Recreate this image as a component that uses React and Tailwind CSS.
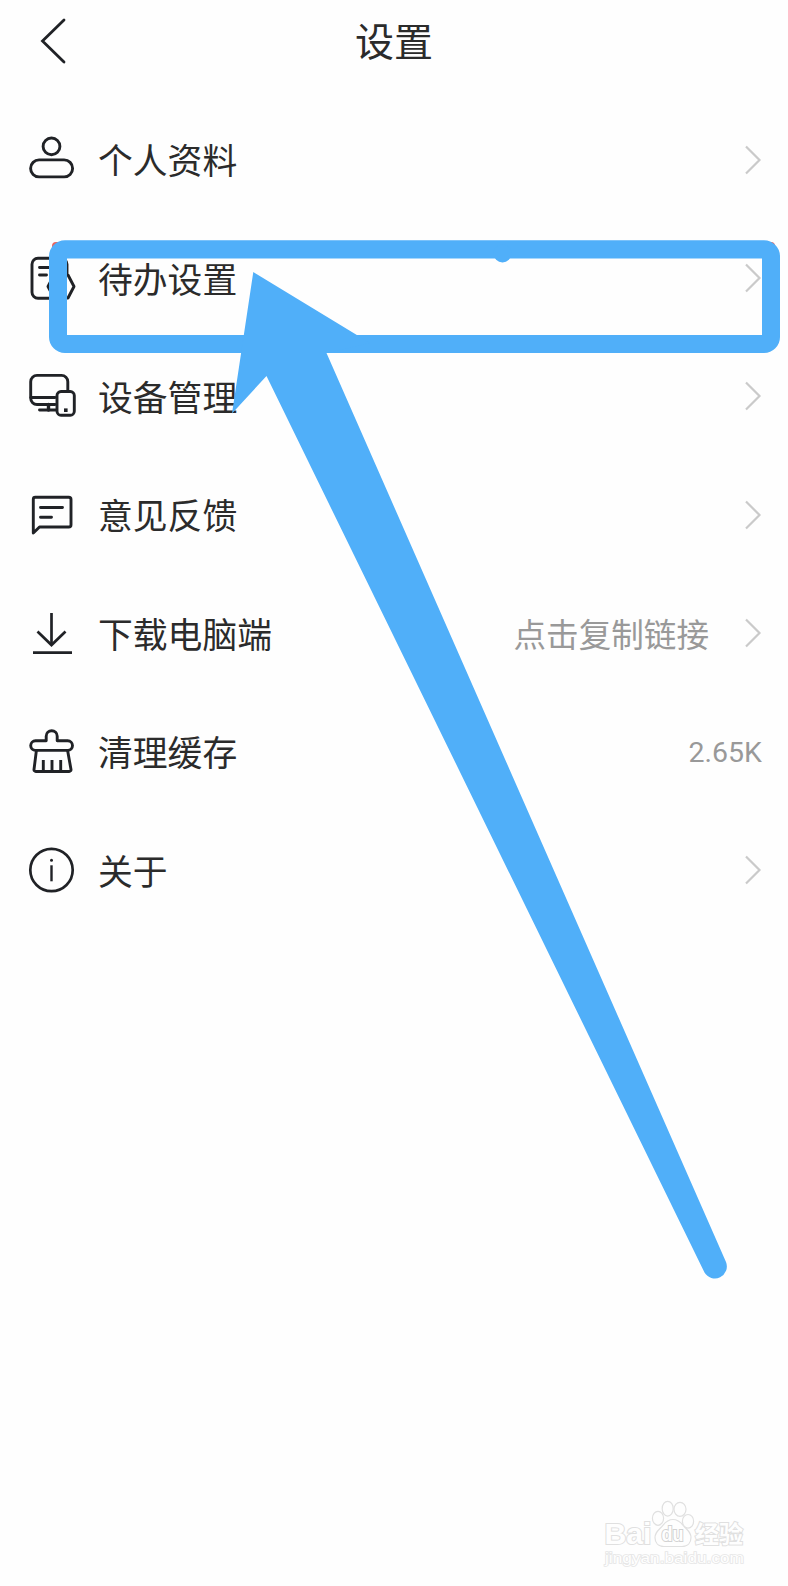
import React from 'react';

const iconProps = {
  width: 48,
  height: 48,
  viewBox: '0 0 48 48',
  fill: 'none',
  stroke: '#202226',
  strokeWidth: 2.9,
  strokeLinecap: 'round',
  strokeLinejoin: 'round',
};

const ProfileIcon = () => (
  <svg {...iconProps}>
    <circle cx="23.5" cy="10.4" r="8.4" />
    <rect x="2.6" y="23.9" width="42" height="17" rx="8.5" />
  </svg>
);

const TodoIcon = () => (
  <svg {...iconProps}>
    <path d="M22 44.3H10a6 6 0 0 1-6-6v-28a6 6 0 0 1 6-6h23a6 6 0 0 1 6 6V19" />
    <path d="M11.5 13.5h17M11.5 21h7" />
    <path d="M26 21h14l6 11.5-6 11.5H26l-6-11.5z" />
  </svg>
);

const DeviceIcon = () => (
  <svg {...iconProps}>
    <path d="M27 32.5H9a6.3 6.3 0 0 1-6.300-6.3V9.7A6.3 6.3 0 0 1 9 3.4h24.500a6.3 6.3 0 0 1 6.300 6.3v9" />
    <path d="M3 25.500h24" />
    <path d="M20.500 32.500v5.500" strokeWidth="3.4" />
    <path d="M11.500 38h16" />
    <rect x="29" y="19.500" width="17.300" height="23.700" rx="4" />
    <rect x="36" y="36.400" width="3.600" height="3.600" fill="#202226" stroke="none" />
  </svg>
);

const FeedbackIcon = () => (
  <svg {...iconProps}>
    <path d="M5.300 42V8.300A2 2 0 0 1 7.300 6.300h33.400A2.300 2.300 0 0 1 43 8.600v25.100a2.300 2.300 0 0 1-2.300 2.300H11.500z" />
    <path d="M12.500 16.500H34.500M12.500 26.200H23.500" />
  </svg>
);

const DownloadIcon = () => (
  <svg {...iconProps} strokeWidth="2.700" strokeLinecap="butt" strokeLinejoin="miter">
    <path d="M23.500 4v32" />
    <path d="M9.500 22.500l14 13.500 14-13.500" />
    <path d="M5 43.600h39" />
  </svg>
);

const CleanIcon = () => (
  <svg {...iconProps}>
    <path d="M18.200 12.800V8.200a5.500 5.500 0 0 1 11 0v4.600h10.500a4.700 4.700 0 0 1 0 9.600H7.500a4.700 4.700 0 0 1 0-9.600z" />
    <path d="M8.400 22.400L6 41.500a1.800 1.800 0 0 0 1.800 2h33.400a1.800 1.800 0 0 0 1.800-2L39.600 22.400" />
    <path d="M15.300 32v11.500M24 32v11.500M32.700 32v11.500" strokeLinecap="butt" />
  </svg>
);

const AboutIcon = () => (
  <svg {...iconProps} strokeWidth="2.700">
    <circle cx="23.500" cy="24" r="21.200" />
    <path d="M23.500 19.300v16" strokeWidth="2.400" strokeLinecap="butt" />
    <circle cx="23.500" cy="14.300" r="1.500" fill="#202226" stroke="none" />
  </svg>
);

const ChevronIcon = () => (
  <svg width="18" height="30" viewBox="0 0 18 30" fill="none" stroke="#cacaca" strokeWidth="2.200">
    <path d="M2 1.500L15.500 15 2 28.500" />
  </svg>
);

const items = [
  { label: '个人资料', icon: ProfileIcon, arrow: true },
  { label: '待办设置', icon: TodoIcon, arrow: true },
  { label: '设备管理', icon: DeviceIcon, arrow: true },
  { label: '意见反馈', icon: FeedbackIcon, arrow: true },
  { label: '下载电脑端', icon: DownloadIcon, hint: '点击复制链接', arrow: true },
  { label: '清理缓存', icon: CleanIcon, value: '2.65K' },
  { label: '关于', icon: AboutIcon, arrow: true },
];

const SettingRow = ({ item }) => {
  const Icon = item.icon;
  return (
    <li className="flex h-[118.4px] items-center pr-[26px] pl-7">
      <Icon />
      <span className="ml-[22px] text-[34.8px] leading-none whitespace-nowrap">{item.label}</span>
      <div className="ml-auto flex items-center text-[#999]">
        {item.hint && <span className="mr-[35px] text-[32.6px] leading-none">{item.hint}</span>}
        {item.value && (
          <span className="pt-1 font-['Roboto',sans-serif] text-[28.5px] leading-none">{item.value}</span>
        )}
        {item.arrow && <ChevronIcon />}
      </div>
    </li>
  );
};

// Highlight frame and pointer drawn over the list
const Annotation = () => (
  <svg className="pointer-events-none absolute inset-0" width="788" height="1586" viewBox="0 0 788 1586">
    <path d="M52 249v-3a4 4 0 0 1 4-4h6zM775 248v-2a4 4 0 0 0-4-4h-5z" fill="#e8665f" />
    <path
      fill="#50aff9"
      fillRule="evenodd"
      d="M65 240.300H764a16 16 0 0 1 16 16V337a16 16 0 0 1-16 16H65a16 16 0 0 1-16-16V256.300a16 16 0 0 1 16-16zM67 258.400V335H762V258.400z"
    />
    <circle cx="502.500" cy="253.400" r="9" fill="#50aff9" />
    <path
      fill="#50aff9"
      d="M253.300 272L370 343L326.500 353L726 1262A12 12 0 0 1 704.500 1272.500L266.500 376L232 413.500z"
    />
  </svg>
);

const Watermark = () => (
  <svg
    className="pointer-events-none absolute right-[38px] bottom-3"
    width="150"
    height="76"
    viewBox="0 0 150 76"
    fill="#fefefe"
    stroke="#e0e0e0"
    strokeWidth="1.200"
  >
    <ellipse cx="58" cy="20.300" rx="5.600" ry="7" />
    <ellipse cx="67.700" cy="10.700" rx="5.500" ry="7.400" />
    <ellipse cx="80" cy="11.300" rx="6" ry="7" />
    <ellipse cx="88" cy="23.300" rx="5.600" ry="6.800" />
    <path d="M73 21.500c-7 0-9 5-12 8s-6 5-6 10c0 5 3 9 9 9h18c6 0 9-4 9-9 0-5-3-7-6-10s-5-8-12-8z" />
    <g style={{ paintOrder: 'stroke' }} strokeWidth="2" fontWeight="700" fontFamily="'Liberation Sans', sans-serif">
      <text x="4.500" y="45.500" fontSize="30" textLength="47" lengthAdjust="spacingAndGlyphs">Bai</text>
      <text x="61.500" y="42.500" fontSize="20" textLength="22" lengthAdjust="spacingAndGlyphs" stroke="#d2d2d2">du</text>
      <text x="95" y="45" fontSize="24" textLength="48" fontFamily="'Noto Sans CJK SC', sans-serif">经验</text>
    </g>
    <text
      x="5"
      y="65"
      fontSize="15.500"
      textLength="139"
      lengthAdjust="spacingAndGlyphs"
      fontFamily="'Liberation Sans', sans-serif"
      stroke="#e6e6e6"
      strokeWidth="1.600"
      style={{ paintOrder: 'stroke' }}
    >
      jingyan.baidu.com
    </text>
  </svg>
);

export default function App() {
  return (
    <div className="relative h-[1586px] w-[788px] overflow-hidden bg-[#fefefe] font-['Noto_Sans_CJK_SC',sans-serif] text-[#2b2b2b]">
      <header className="grid h-[100.4px] grid-cols-[1fr_auto_1fr] items-start px-[38px] pt-[15px]">
        <button type="button" className="w-8">
          <svg width="30" height="52" viewBox="0 0 30 52" fill="none" stroke="#202226" strokeWidth="2.800" strokeLinecap="round">
            <path d="M26 5L4.500 26 26 47" />
          </svg>
        </button>
        <h1 className="mt-[5px] text-[39px] leading-none">设置</h1>
      </header>

      <ul>
        {items.map((item) => (
          <SettingRow key={item.label} item={item} />
        ))}
      </ul>

      <Annotation />
      <Watermark />
    </div>
  );
}
